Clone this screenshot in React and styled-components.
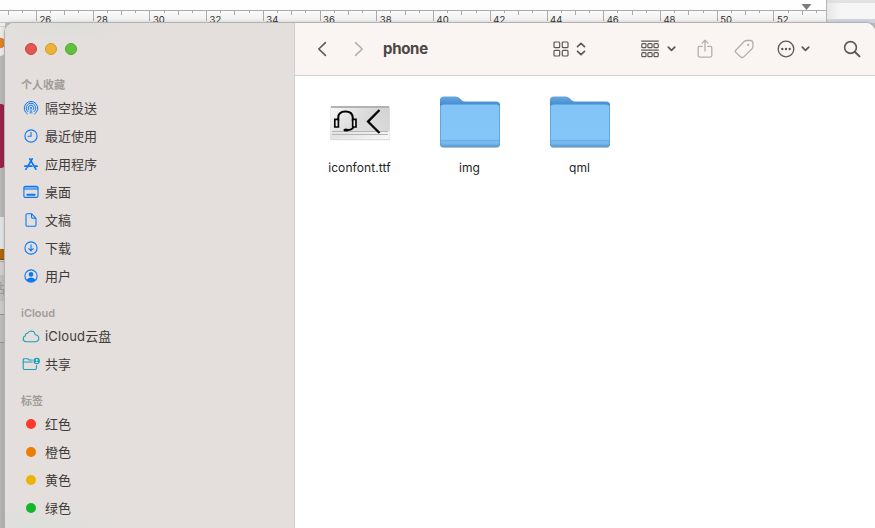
import React from "react";
import styled, { createGlobalStyle } from "styled-components";

const Global = createGlobalStyle`
  * { box-sizing: border-box; }
  body {
    margin: 0;
    overflow: hidden;
    font-family: Inter, "Noto Sans CJK SC", sans-serif;
    color: #3e3b3a;
  }
  svg { display: block; flex: none; }
`;

const LineIcon = styled.svg`
  fill: none;
  stroke: currentColor;
  stroke-linecap: round;
  stroke-linejoin: round;
`;

const Desktop = styled.div`
  position: relative;
  width: 875px;
  height: 528px;
  overflow: hidden;
  background: #bfbdbc;
`;

const TopStrip = styled.div`
  display: flex;
  height: 23px;
`;

const RulerPane = styled.div`
  width: 826px;
  background: linear-gradient(#fefefe 0 9px, #fbfbfb 11px, #ececec 23px);
`;

const RulerSvg = styled.svg`
  overflow: visible;
`;

const BehindRight = styled.div`
  flex: 1;
  border-left: 1px solid #b5b5b5;
  background: linear-gradient(90deg, #d8d8d880, transparent 14px), linear-gradient(#e2e2e2 0 3px, #f6f6f6 3px 19px, #ced5e1 19px);
`;

const LeftStrip = styled.div`
  display: flex;
  flex-direction: column;
  width: 5px;
`;

const Block = styled.div`
  flex: none;
  height: ${(p) => p.$h}px;
  background: ${(p) => p.$bg};
  border-top-right-radius: ${(p) => p.$tr || 0}px;
  border-bottom-right-radius: ${(p) => p.$br || 0}px;
`;

const Sliver = styled(Block)`
  display: flex;
  justify-content: flex-end;
  color: #999;
  font-size: 13px;
  line-height: 26px;
`;

const Window = styled.div`
  position: absolute;
  left: 5px;
  top: 23px;
  width: 870px;
  height: 505px;
  display: flex;
  overflow: hidden;
  border-radius: 9px 9px 0 0;
  background: #fff;
  box-shadow: 0 0 0 1px #b3b1b0, 0 0 4px #0003;
`;

const Sidebar = styled.aside`
  width: 290px;
  flex: none;
  background:
    radial-gradient(ellipse 75px 22px at 60px 0, #dcdeda, transparent),
    radial-gradient(ellipse 90px 28px at 25px 505px, #dde0dc, transparent),
    #e4dfdc;
  border-right: 1px solid #d2cdca;
`;

const Lights = styled.div`
  display: flex;
  gap: 8px;
  height: 39px;
  padding: 20px 0 0 20px;
`;

const Light = styled.i`
  width: 12px;
  height: 12px;
  border-radius: 50%;
  background: ${(p) => p.$c};
  border: 1px solid ${(p) => p.$b};
`;

const SectionTitle = styled.h2`
  height: 32px;
  margin: 0;
  padding: 14px 0 0 16px;
  font-size: 11px;
  font-weight: 600;
  line-height: 18px;
  color: #a19c99;
`;

const Item = styled.div`
  display: flex;
  align-items: center;
  height: 28px;
  padding-left: 16px;
  font-size: 13px;
  line-height: 20px;
  white-space: nowrap;
`;

const ItemIcon = styled.span`
  display: flex;
  justify-content: center;
  width: 20px;
  margin-right: 4px;
  color: ${(p) => p.$c};
`;

const Label = styled.span`
  letter-spacing: ${(p) => p.$ls || 0}px;
`;

const Dot = styled.i`
  width: 10px;
  height: 10px;
  border-radius: 50%;
  margin-right: 1px;
  background: ${(p) => p.$c};
`;

const Main = styled.main`
  flex: 1;
  min-width: 0;
`;

const Toolbar = styled.header`
  display: flex;
  align-items: center;
  height: 53px;
  padding-bottom: 1px;
  background: #faf5f2;
  border-bottom: 1px solid #d5d1cf;
`;

const Tool = styled.span`
  flex: none;
  display: flex;
  width: ${(p) => p.$w}px;
  margin-left: ${(p) => p.$gap}px;
  color: ${(p) => (p.$dim ? "#b3aeab" : "#5d5855")};
`;

const Title = styled.h1`
  width: 47px;
  margin: 0 0 0 19px;
  font-size: 15px;
  font-weight: 700;
  line-height: 20px;
  letter-spacing: -0.3px;
  color: #4a4644;
`;

const Files = styled.div`
  display: flex;
  padding: 14px 0 0 10px;
`;

const File = styled.div`
  display: flex;
  flex-direction: column;
  align-items: center;
  width: 110px;
`;

const FileArt = styled.div`
  display: flex;
  align-items: center;
  height: 66px;
`;

const FileName = styled.span`
  margin: 3px 1px 0 0;
  font-size: 12px;
  line-height: 18px;
  letter-spacing: ${(p) => p.$ls || 0}px;
  color: #252525;
`;

const Svg = ({ w, h = w, sw = 1.1, children }) => (
  <LineIcon width={w} height={h} viewBox={`0 0 ${w} ${h}`} strokeWidth={sw}>{children}</LineIcon>
);

const AirDrop = () => (
  <Svg w={16} sw={1}>
    <path d="M4.4 14A6.8 6.8 0 1 1 11.6 14M5 11.8A4.8 4.8 0 1 1 11 11.8M5.9 9.9A2.8 2.8 0 1 1 10.1 9.9" />
    <path d="M8 8L6.2 13.5H9.8Z" fill="currentColor" stroke="none" opacity=".6" />
    <circle cx="8" cy="8" r="1" fill="currentColor" stroke="none" />
  </Svg>
);
const Clock = () => <Svg w={14}><circle cx="7" cy="7" r="6.1" /><path d="M7 3.2V7.3H4.1" /></Svg>;
const Apps = () => (
  <Svg w={14} sw={1.7}>
    <path d="M8.2 1.8L3.2 10.4M5.8 1.8L11.8 12.2M.9 9.2H7.8M10.8 9.2H13.1M2.2 11.8L1.9 12.2" />
  </Svg>
);
const DesktopIcon = () => (
  <Svg w={16} h={14}>
    <rect x=".9" y="1.4" width="14.1" height="11" rx="1.4" />
    <path d="M1.3 2.9H14.7" strokeWidth="2" opacity=".5" />
    <path d="M1.3 4.3H14.7" strokeWidth=".7" />
    <path d="M4.4 9.7H11.6" strokeWidth="2" />
  </Svg>
);
const Doc = () => <Svg w={12} h={14}><path d="M2.3.7H6.5L11 5.3V12Q11 13.3 9.7 13.3H2.3Q1 13.3 1 12V2Q1 .7 2.3.7ZM6.5.8V4Q6.5 5.3 7.8 5.3H11" /></Svg>;
const Download = () => <Svg w={14}><circle cx="7" cy="7" r="6.1" /><path d="M7 3.8V9.8M4.8 7.7L7 9.9L9.2 7.7" /></Svg>;
const User = () => (
  <Svg w={14}>
    <circle cx="7" cy="7" r="6.1" />
    <circle cx="7" cy="5.4" r="2.3" fill="currentColor" stroke="none" />
    <path d="M2.4 11Q3.8 8.5 7 8.5T11.6 11Q9.8 13 7 13T2.4 11Z" fill="currentColor" stroke="none" />
  </Svg>
);
const Cloud = () => <Svg w={18} h={13}><path d="M4.4 11.7Q1.2 11.4 1.2 8.7Q1.2 6.5 3.3 5.9Q3.1 3.5 5.5 3.3Q6.7 1 9.1 1Q12.7 1.1 13.2 4.7Q16.8 5.1 16.8 8.3Q16.7 11.5 13.6 11.7Z" /></Svg>;
const Shared = () => (
  <Svg w={18} h={14}>
    <path d="M10.4 3H7.2L5.8 1.7H2.4Q1.2 1.7 1.2 2.9V11Q1.2 12.5 2.6 12.5H13.1Q14.5 12.5 14.5 11V8.5M1.2 5H10.2" />
    <circle cx="14.7" cy="4" r="3.2" fill="currentColor" stroke="none" />
    <circle cx="14.7" cy="3.1" r="1.1" fill="#e4dfdc" stroke="none" />
    <path d="M12.9 5.9Q14.7 3.7 16.5 5.9Z" fill="#e4dfdc" stroke="none" />
  </Svg>
);

const Chevron = () => <Svg w={9} h={6} sw={1.7}><path d="M1.3 1.2L4.5 4.4L7.7 1.2" /></Svg>;

const GroupIcon = () => (
  <Svg w={18} h={18} sw={1.2}>
    <path d="M.6 1.1H17.4M.6 10.1H17.4" />
    {[3.6, 12.6].map((y) => [0.8, 6.9, 13].map((x) => <rect key={`${x}-${y}`} x={x} y={y} width="4.2" height="4.1" rx=".9" />))}
  </Svg>
);

const Folder = ({ id }) => (
  <svg width="62" height="54" viewBox="0 0 62 54">
    <defs>
      <linearGradient id={`back-${id}`} x2="0" y2="1">
        <stop stopColor="#67a8de" /><stop offset=".14" stopColor="#4a91d3" /><stop offset=".22" stopColor="#3272ba" />
      </linearGradient>
      <linearGradient id={`front-${id}`} x2="0" y2="1">
        <stop stopColor="#83c4f7" /><stop offset=".82" stopColor="#84c6f8" /><stop offset=".83" stopColor="#75b8ed" /><stop offset=".93" stopColor="#75b9ef" /><stop offset=".96" stopColor="#5ca4df" />
      </linearGradient>
    </defs>
    <path d="M1 6Q1 2 5 2H57Q61 7 61 11V48Q61 52 57 52H5Q1 52 1 48Z" fill="#0000" />
    <path d="M1 40V48Q1 52 5 52H57Q61 52 61 48V40Z" fill="#0004" />
    <path d="M1 4Q1 .5 5 .5H16.5Q18.5 .5 20.5 2L23 4.4Q24.2 5.4 26.5 5.4H57Q61 5.4 61 9V47Q61 51 57 51H5Q1 51 1 47Z" fill={`url(#back-${id})`} />
    <path d="M1 12.3Q1 8.5 5 8.5H57Q61 8.5 61 12.3V47Q61 51 57 51H5Q1 51 1 47Z" fill={`url(#front-${id})`} />
    <path d="M1.5 11V47Q1.5 50.5 5 50.5H57Q60.5 50.5 60.5 47V11" fill="none" stroke="#589ed7" strokeWidth=".8" />
    <path d="M2 44.5H60" stroke="#68acdf" strokeWidth=".7" />
  </svg>
);

const FontPreview = () => (
  <svg width="62" height="38" viewBox="0 0 62 38">
    <defs>
      <linearGradient id="paper" x2="1" y2="1"><stop stopColor="#fbfbfb" /><stop offset=".48" stopColor="#e3e3e3" /><stop offset="1" stopColor="#f7f7f7" /></linearGradient>
      <linearGradient id="sheen"><stop stopColor="#ccc" stopOpacity="0" /><stop offset="1" stopColor="#ccc" stopOpacity=".7" /></linearGradient>
    </defs>
    <rect x="1" y="2.2" width="60" height="34" rx="1" fill="#0002" />
    <rect x="1.5" y="2" width="59" height="33" fill="url(#paper)" />
    <path d="M1.5 4H60.5V27H1.5Z" fill="url(#sheen)" />
    <path d="M2 3H60" stroke="#b2b2b2" strokeWidth="1.8" />
    <path d="M3 27.5H59M3 30.5H59" stroke="#b5b5b5" />
    <g stroke="#050505" strokeLinejoin="miter">
      <path d="M9.2 17V14Q9.2 7.5 16.4 7.5T23.8 14V17M24.5 23Q23.5 26 18 26.2" fill="none" strokeWidth="2" />
      <path d="M5.8 15.3H9.4V23H5.8ZM23.7 15.3H27V23H23.7Z" fill="#eee" strokeWidth="1.7" />
      <ellipse cx="17" cy="26" rx="2.6" ry="1.6" fill="#050505" stroke="none" />
      <path d="M50.5 6L39 17.6L50.5 29" fill="none" strokeWidth="2.3" />
    </g>
  </svg>
);

const majors = Array.from({ length: 15 }, (_, i) => -20.3 + i * 56.73);

const Ruler = () => (
  <RulerSvg width="826" height="23" viewBox="0 0 826 23">
    <path d="M0 10.5H826" stroke="#aaa" />
    <path d="M0 22.5H826" stroke="#c8c6c5" />
    {majors.map((x, i) => (
      <g key={i}>
        <path
          d={[[0, 21], [14, 13], [28, 15], [42, 13]]
            .filter(([dx]) => x + dx < 826)
            .map(([dx, y]) => `M${Math.floor(x + dx * 1.013) + 0.5} 10V${y}`).join("")}
          stroke="#aaa"
        />
        {i > 0 && <text x={x + 3} y="23" fontSize="9.5" fill="#2e2e2e">{24 + i * 2}</text>}
      </g>
    ))}
    <path d="M801.5 4H811.5L806.5 10Z" fill="#7b7b7b" />
  </RulerSvg>
);

const favorites = [
  [AirDrop, "隔空投送"], [Clock, "最近使用"], [Apps, "应用程序"], [DesktopIcon, "桌面"],
  [Doc, "文稿"], [Download, "下载"], [User, "用户"],
];
const cloudItems = [[Cloud, "iCloud云盘", 0.15], [Shared, "共享"]];
const tags = [["#ff3a2d", "红色"], ["#ec7d00", "橙色"], ["#eab500", "黄色"], ["#12b72c", "绿色"]];

const Rows = ({ items, color }) => items.map(([Icon, label, ls]) => (
  <Item key={label}><ItemIcon $c={color}><Icon /></ItemIcon><Label $ls={ls}>{label}</Label></Item>
));

export default function App() {
  return (
    <Desktop>
      <Global />
      <TopStrip>
        <RulerPane><Ruler /></RulerPane>
        <BehindRight />
      </TopStrip>
      <LeftStrip>
        <Block $h={3} $bg="#eeeeee" />
        <Block $h={1} $bg="#cfcfcf" />
        <Block $h={29} $br={5} $bg="radial-gradient(circle at 0 16px, #d9822b 5px, #e9e9ea 5.7px)" />
        <Block $h={48} $bg="#b9b7b6" />
        <Block $h={64} $bg="#9a2148" $tr={4} $br={4} />
        <Block $h={49} $bg="#b8b6b5" />
        <Block $h={32} $bg="#dfe1e2" />
        <Block $h={10} $bg="#ac6508" />
        <Block $h={1} $bg="#704512" />
        <Block $h={1} $bg="#d8d8d8" />
        <Block $h={1} $bg="#a5a5a5" />
        <Block $h={13} $bg="#cfcdcc" />
        <Sliver $h={26} $bg="#bfbdbb">站</Sliver>
        <Block $h={13} $bg="#cbc9c7" />
        <Block $h={1} $bg="#969493" />
        <Block $h={27} $bg="#bdbbb9" />
        <Block $h={1} $bg="#969493" />
        <Block $h={185} $bg="#b5b3b1" />
      </LeftStrip>
      <Window>
        <Sidebar>
          <Lights>
            <Light $c="#e2574f" $b="#c9443f" />
            <Light $c="#edb338" $b="#d39a2b" />
            <Light $c="#62c03f" $b="#4ea62f" />
          </Lights>
          <SectionTitle>个人收藏</SectionTitle>
          <Rows items={favorites} color="#0a78f5" />
          <SectionTitle>iCloud</SectionTitle>
          <Rows items={cloudItems} color="#1b9fb8" />
          <SectionTitle>标签</SectionTitle>
          {tags.map(([c, label]) => (
            <Item key={label}><ItemIcon><Dot $c={c} /></ItemIcon><Label>{label}</Label></Item>
          ))}
        </Sidebar>
        <Main>
          <Toolbar>
            <Tool $w={10} $gap={22}><Svg w={10} h={16} sw={1.6}><path d="M8.4 1.6L1.8 8L8.4 14.4" /></Svg></Tool>
            <Tool $w={10} $gap={27} $dim><Svg w={10} h={16} sw={1.5}><path d="M1.6 1.6L8.2 8L1.6 14.4" /></Svg></Tool>
            <Title>phone</Title>
            <Tool $w={16} $gap={122.5}>
              <Svg w={16} sw={1.2}>
                {[1, 9.3].map((y) => [1, 9.3].map((x) => <rect key={`${x}-${y}`} x={x} y={y} width="5.7" height="5.7" rx="1" />))}
              </Svg>
            </Tool>
            <Tool $w={10} $gap={7.5}><Svg w={10} h={14} sw={1.7}><path d="M1.5 4.6L5 1.4L8.5 4.6M1.5 9.4L5 12.6L8.5 9.4" /></Svg></Tool>
            <Tool $w={18} $gap={55}><GroupIcon /></Tool>
            <Tool $w={9} $gap={7.5}><Chevron /></Tool>
            <Tool $w={16} $gap={21.5} $dim>
              <Svg w={16} h={20} sw={1.3}><path d="M5.2 7.4H2.7Q1.2 7.4 1.2 8.9V16.6Q1.2 18.1 2.7 18.1H13.3Q14.8 18.1 14.8 16.6V8.9Q14.8 7.4 13.3 7.4H10.8M8 12V1.3M5 4.1L8 1.1L11 4.1" /></Svg>
            </Tool>
            <Tool $w={20} $gap={21} $dim>
              <Svg w={20} sw={1.3}>
                <path d="M1.8 11.2L10.4 2.3Q11.2 1.5 12.4 1.5H16.5Q18.8 1.6 18.9 3.8V7.5Q18.9 8.8 18 9.7L9.5 18.1Q8.1 19.3 6.8 18L1.9 13.5Q.8 12.4 1.8 11.2Z" />
                <circle cx="14.2" cy="5.9" r="1.1" fill="currentColor" stroke="none" />
              </Svg>
            </Tool>
            <Tool $w={18} $gap={23}>
              <Svg w={18} sw={1.3}><circle cx="9" cy="9" r="7.8" /><g fill="currentColor" stroke="none"><circle cx="5.3" cy="9" r="1.2" /><circle cx="9" cy="9" r="1.2" /><circle cx="12.7" cy="9" r="1.2" /></g></Svg>
            </Tool>
            <Tool $w={9} $gap={6}><Chevron /></Tool>
            <Tool $w={18} $gap={33}>
              <Svg w={18} sw={1.6}><circle cx="7.5" cy="7.5" r="5.9" /><path d="M12 12L16.5 16.4" strokeWidth="2" /></Svg>
            </Tool>
          </Toolbar>
          <Files>
            <File><FileArt><FontPreview /></FileArt><FileName $ls={0.1}>iconfont.ttf</FileName></File>
            <File><FileArt><Folder id="img" /></FileArt><FileName>img</FileName></File>
            <File><FileArt><Folder id="qml" /></FileArt><FileName>qml</FileName></File>
          </Files>
        </Main>
      </Window>
    </Desktop>
  );
}
